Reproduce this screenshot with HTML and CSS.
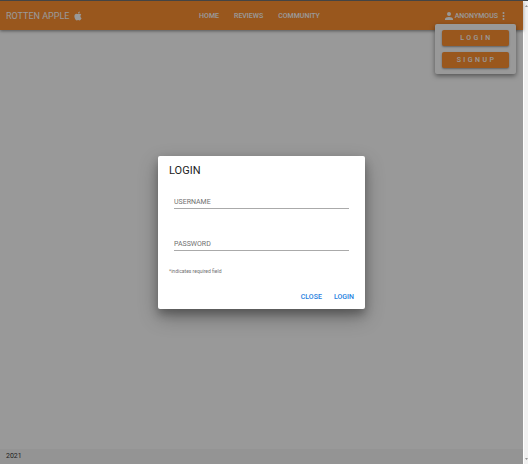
FILE: index.html
```html
<!DOCTYPE html>
<html lang="en">
<head>
<meta charset="utf-8">
<meta name="viewport" content="width=device-width, initial-scale=1">
<title>Rotten Apple</title>
<link rel="stylesheet" href="styles.css">
</head>
<body>
<div class="app">
  <header class="bar">
    <a class="brand" href="#">ROTTEN APPLE
      <svg class="brand-icon" viewBox="3 1 18 22" aria-hidden="true"><path d="M18.71 19.5C17.88 20.74 17 21.95 15.66 21.97C14.32 22 13.89 21.18 12.37 21.18C10.84 21.18 10.37 21.95 9.1 22C7.79 22.05 6.8 20.68 5.96 19.47C4.25 17 2.94 12.45 4.7 9.39C5.57 7.87 7.13 6.91 8.82 6.88C10.1 6.86 11.32 7.75 12.11 7.75C12.89 7.75 14.37 6.68 15.92 6.84C16.57 6.87 18.39 7.1 19.56 8.82C19.47 8.88 17.39 10.1 17.41 12.63C17.44 15.65 20.06 16.66 20.09 16.67C20.06 16.74 19.67 18.11 18.71 19.5M13 3.5C13.73 2.67 14.94 2.04 15.94 2C16.07 3.17 15.6 4.35 14.9 5.19C14.21 6.04 13.07 6.7 11.95 6.61C11.8 5.46 12.36 4.26 13 3.5Z"/></svg>
    </a>
    <nav class="links">
      <a href="#">HOME</a>
      <a href="#">REVIEWS</a>
      <a href="#">COMMUNITY</a>
    </nav>
    <div class="account">
      <button class="account-button" type="button" aria-haspopup="true" aria-expanded="true">
        <svg class="icon-user" viewBox="4 4 16 16" aria-hidden="true"><path d="M12 4A4 4 0 0 1 16 8A4 4 0 0 1 12 12A4 4 0 0 1 8 8A4 4 0 0 1 12 4M12 14C16.42 14 20 15.79 20 18V20H4V18C4 15.79 7.58 14 12 14Z"/></svg>
        ANONYMOUS
        <svg class="icon-dots" viewBox="9 4 6 16" aria-hidden="true"><path d="M12 16A2 2 0 0 1 14 18A2 2 0 0 1 12 20A2 2 0 0 1 10 18A2 2 0 0 1 12 16M12 10A2 2 0 0 1 14 12A2 2 0 0 1 12 14A2 2 0 0 1 10 12A2 2 0 0 1 12 10M12 4A2 2 0 0 1 14 6A2 2 0 0 1 12 8A2 2 0 0 1 10 6A2 2 0 0 1 12 4Z"/></svg>
      </button>
      <div class="menu">
        <button type="button">LOGIN</button>
        <button type="button">SIGNUP</button>
      </div>
    </div>
  </header>
  <main class="content"></main>
  <footer class="footer">2021</footer>
  <div class="overlay">
    <form class="dialog" role="dialog" aria-labelledby="dialog-title">
      <h1 id="dialog-title">LOGIN</h1>
      <div class="fields">
        <input type="text" placeholder="USERNAME" aria-label="Username">
        <input type="password" placeholder="PASSWORD" aria-label="Password">
      </div>
      <small>*indicates required field</small>
      <div class="actions">
        <button type="button">CLOSE</button>
        <button type="button">LOGIN</button>
      </div>
    </form>
  </div>
</div>
<div class="scrollbar" aria-hidden="true">
  <svg viewBox="0 0 4 2"><path d="M0 2L2 0L4 2Z"/></svg>
  <svg viewBox="0 0 4 2"><path d="M0 0L2 2L4 0Z"/></svg>
</div>
</body>
</html>
```
FILE: styles.css
```css
* {
  box-sizing: border-box;
}

body {
  margin: 0;
  min-height: 100vh;
  display: flex;
  border-top: 1px solid #444;
  font-family: Roboto, "Liberation Sans", sans-serif;
  color: #222;
}

a {
  color: inherit;
  text-decoration: none;
}

button {
  border: 0;
  padding: 0;
  background: none;
  color: inherit;
  font: inherit;
}

svg {
  display: block;
  fill: currentColor;
}

.app {
  position: relative;
  flex: 1;
  display: flex;
  flex-direction: column;
  background: #fff;
}

.bar {
  display: grid;
  grid-template-columns: 1fr auto 1fr;
  align-items: center;
  height: 29px;
  padding: 0 18px 0 6px;
  background: #ff851b;
  color: #fff;
  box-shadow: 0 1px 3px rgba(0, 0, 0, 0.5);
}

.brand {
  display: flex;
  align-items: center;
  gap: 5px;
  font-size: 9px;
}

.brand-icon {
  width: 8px;
  height: 10px;
}

.links {
  display: flex;
  gap: 15px;
  padding-left: 8px;
  font-size: 7px;
  font-weight: 500;
}

.account {
  position: relative;
  justify-self: end;
}

.account-button {
  display: flex;
  align-items: center;
  gap: 2px;
  font-size: 7px;
  font-weight: 500;
  line-height: 8px;
}

.icon-user {
  width: 8px;
  height: 8px;
}

.icon-dots {
  width: 3px;
  height: 8px;
  margin-left: 2px;
}

.menu {
  position: absolute;
  top: 100%;
  right: -11px;
  width: 81px;
  margin-top: 4px;
  padding: 6px 7px;
  display: grid;
  gap: 6px;
  border-radius: 2px;
  background: #fff;
  box-shadow: 0 2px 5px rgba(0, 0, 0, 0.5);
}

.menu button {
  height: 16px;
  padding-left: 2px;
  border-radius: 2px;
  background: #ff851b;
  box-shadow: 0 1px 2px rgba(0, 0, 0, 0.4);
  font-size: 7px;
  font-weight: 500;
  letter-spacing: 0.35em;
}

.content {
  flex: 1;
}

.footer {
  padding: 0 6px;
  background: #f5f5f5;
  font-size: 7px;
  line-height: 15px;
}

.overlay {
  position: absolute;
  inset: 0;
  display: grid;
  place-items: center;
  background: rgba(33, 33, 33, 0.46);
}

.dialog {
  width: 39%;
  min-width: 207px;
  padding: 8px 11px 6px;
  border-radius: 2px;
  background: #fff;
  box-shadow: 0 5px 8px rgba(0, 0, 0, 0.25), 0 8px 20px rgba(0, 0, 0, 0.3);
}

.dialog h1 {
  margin: 0;
  font-size: 11px;
  font-weight: 400;
  line-height: 13px;
}

.fields {
  display: grid;
  gap: 25px;
  padding: 15px 5px 16px;
}

.fields input {
  width: 100%;
  height: 17px;
  padding: 3px 0 0;
  border: 0;
  border-bottom: 1px solid #aaa;
  border-radius: 0;
  outline: 0;
  background: none;
  font: 7px Roboto, "Liberation Sans", sans-serif;
}

.fields input::placeholder {
  color: #707070;
}

.dialog small {
  display: block;
  color: #707070;
  font-size: 5px;
  line-height: 8px;
}

.actions {
  display: flex;
  justify-content: flex-end;
  gap: 12px;
  margin-top: 16px;
  color: #1e80e0;
  font-size: 7px;
  font-weight: 500;
  line-height: 12px;
}

.scrollbar {
  display: flex;
  flex-direction: column;
  justify-content: space-between;
  align-items: flex-end;
  width: 5px;
  padding: 4px 0;
  background: #f1f1f1;
  border-left: 1px solid #fff;
  color: #777;
}

.scrollbar svg {
  width: 3px;
  height: 2px;
}
```
